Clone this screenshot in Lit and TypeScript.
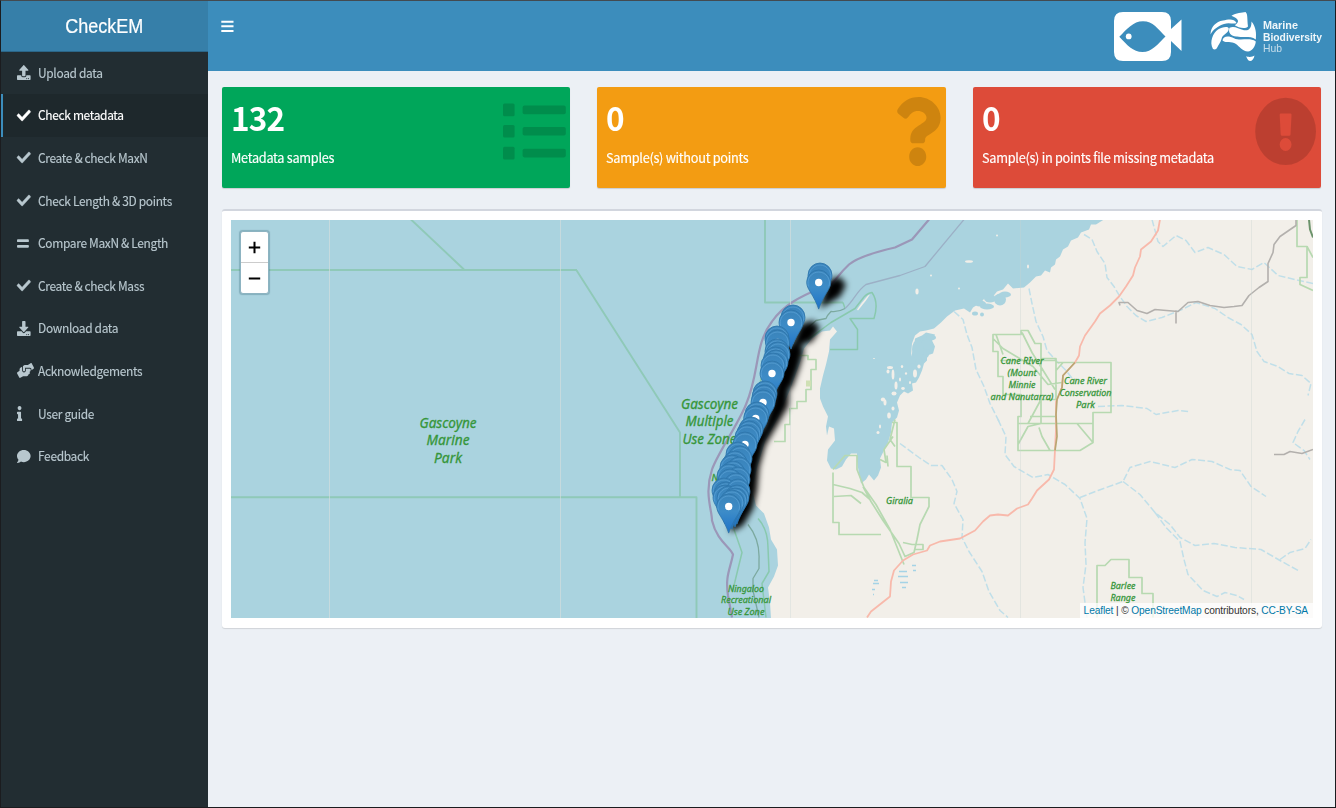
import { LitElement, html, svg, css } from "lit";
import { customElement, property } from "lit/decorators.js";

const DISK = "v112c0 13.3-10.7 24-24 24H24c-13.3 0-24-10.7-24-24V376c0-13.3 10.7-24 24-24h136v8c0 30.9 25.1 56 56 56h80c30.9 0 56-25.1 56-56v-8h136c13.3 0 24 10.7 24 24zm-124 88c0-11-9-20-20-20s-20 9-20 20 9 20 20 20 20-9 20-20zm64 0c0-11-9-20-20-20s-20 9-20 20 9 20 20 20 20-9 20-20z";
const ICONS: Record<string, { w: number; d: string }> = {
  upload: { w: 512, d: "M296 384h-80c-13.3 0-24-10.7-24-24V192h-87.7c-17.8 0-26.7-21.5-14.1-34.1L242.3 5.7c7.5-7.5 19.8-7.5 27.3 0l152.2 152.2c12.6 12.6 3.7 34.1-14.1 34.1H320v168c0 13.3-10.7 24-24 24zm216-8" + DISK },
  download: { w: 512, d: "M216 0h80c13.3 0 24 10.7 24 24v168h87.7c17.8 0 26.7 21.5 14.1 34.1L269.7 378.3c-7.5 7.5-19.8 7.5-27.3 0L90.1 226.1c-12.6-12.6-3.7-34.1 14.1-34.1H192V24c0-13.3 10.7-24 24-24zm296 376" + "v112c0 13.3-10.7 24-24 24H24c-13.3 0-24-10.7-24-24V376c0-13.3 10.7-24 24-24h146.7l49 49c20.1 20.1 52.5 20.1 72.6 0l49-49H488c13.3 0 24 10.7 24 24zm-124 88c0-11-9-20-20-20s-20 9-20 20 9 20 20 20 20-9 20-20zm64 0c0-11-9-20-20-20s-20 9-20 20 9 20 20 20 20-9 20-20z" },
  check: { w: 512, d: "M173.898 439.404l-166.4-166.4c-9.997-9.997-9.997-26.206 0-36.204l36.203-36.204c9.997-9.998 26.207-9.998 36.204 0L192 312.69 432.095 72.596c9.997-9.997 26.207-9.997 36.204 0l36.203 36.204c9.997 9.997 9.997 26.206 0 36.204l-294.4 294.401c-9.998 9.997-26.207 9.997-36.204-.001z" },
  equals: { w: 448, d: "M416 304H32c-17.67 0-32 14.33-32 32v32c0 17.67 14.33 32 32 32h384c17.67 0 32-14.33 32-32v-32c0-17.67-14.33-32-32-32zm0-192H32c-17.67 0-32 14.33-32 32v32c0 17.67 14.33 32 32 32h384c17.67 0 32-14.33 32-32v-32c0-17.67-14.33-32-32-32z" },
  hands: { w: 640, d: "M488 192H336v56c0 39.7-32.3 72-72 72s-72-32.3-72-72V126.4l-64.9 39C107.8 176.9 96 197.8 96 220.2v47.3l-80 46.2C.7 322.5-4.6 342.1 4.3 357.4l80 138.6c8.8 15.3 28.4 20.5 43.7 11.7L231.4 448H368c35.3 0 64-28.7 64-64h16c17.7 0 32-14.3 32-32v-64h8c13.3 0 24-10.7 24-24v-48c0-13.3-10.7-24-24-24zm147.7-37.4L555.7 16C546.9.7 527.3-4.5 512 4.3L408.6 64H306.4c-12 0-23.7 3.4-33.9 9.7L239 94.6c-9.4 5.8-15 16.1-15 27.1V248c0 22.1 17.9 40 40 40s40-17.9 40-40v-88h184c30.9 0 56 25.1 56 56v28.5l80-46.2c15.3-8.9 20.5-28.4 11.7-43.7z" },
  info: { w: 192, d: "M20 424.229h20V279.771H20c-11.046 0-20-8.954-20-20V212c0-11.046 8.954-20 20-20h112c11.046 0 20 8.954 20 20v212.229h20c11.046 0 20 8.954 20 20V492c0 11.046-8.954 20-20 20H20c-11.046 0-20-8.954-20-20v-47.771c0-11.046 8.954-20 20-20zM96 0C56.235 0 24 32.235 24 72s32.235 72 72 72 72-32.235 72-72S135.764 0 96 0z" },
  comment: { w: 512, d: "M256 32C114.6 32 0 125.1 0 240c0 49.6 21.4 95 57 130.7C44.5 421.1 2.7 466 2.2 466.5c-2.2 2.3-2.8 5.7-1.5 8.7S4.8 480 8 480c66.3 0 116-31.8 140.6-51.4 32.7 12.3 69 19.4 107.4 19.4 141.4 0 256-93.1 256-208S397.4 32 256 32z" },
};

const MENU: [string, string][] = [
  ["upload", "Upload data"],
  ["check", "Check metadata"],
  ["check", "Create & check MaxN"],
  ["check", "Check Length & 3D points"],
  ["equals", "Compare MaxN & Length"],
  ["check", "Create & check Mass"],
  ["download", "Download data"],
  ["hands", "Acknowledgements"],
  ["info", "User guide"],
  ["comment", "Feedback"],
];

@customElement("side-menu")
class SideMenu extends LitElement {
  static styles = css`
    :host { display: block; background: #222d32; }
    .item {
      display: flex; align-items: center; box-sizing: border-box; height: 42.6px;
      padding-left: 13px; border-left: 3px solid transparent; color: #b8c7ce;
      font: 13px/18px "Noto Sans CJK SC", "Noto Sans", sans-serif;
      white-space: nowrap;
    }
    .active { background: #1e282c; border-left: 2px solid #3c8dbc; padding-left: 14px; color: #fff; }
    .icon { width: 20.5px; flex: none; display: flex; }
    .icon svg { height: 15px; fill: currentColor; overflow: visible; }
    .icon .heavy { stroke: currentColor; stroke-width: 14; }
    .label { letter-spacing: -0.35px; transform: scaleX(0.918); transform-origin: left; -webkit-text-stroke: 0.15px currentColor; }
  `;
  render() {
    return html`${MENU.map(([icon, label], i) => {
      const { w, d } = ICONS[icon];
      return html`<div class="item ${i === 1 ? "active" : ""}">
        <span class="icon"><svg class=${icon === "check" ? "heavy" : ""} viewBox="0 0 ${w} 512" width=${(w / 512) * 13.6} preserveAspectRatio="none"><path d=${d}></path></svg></span>
        <span class="label">${label}</span>
      </div>`;
    })}`;
  }
}

@customElement("value-box")
class ValueBox extends LitElement {
  @property() value = "";
  @property() label = "";
  @property() kind = "";
  static styles = css`
    :host { display: block; }
    .box {
      display: flex; justify-content: space-between; box-sizing: border-box; height: 101.5px;
      padding: 0 0 0 9px; border-radius: 2px; color: #fff; box-shadow: 0 1px 1px rgba(0, 0, 0, 0.15);
      font-family: "Noto Sans CJK SC", "Noto Sans", sans-serif;
    }
    .list { background: #00a65a; }
    .question { background: #f39c12; }
    .alert { background: #dd4b39; }
    .value { font-size: 33px; line-height: 40px; font-weight: 700; margin-top: 10.5px; letter-spacing: -0.9px; transform: scaleX(0.955); transform-origin: left; }
    .label { font-size: 13.3px; line-height: 20px; margin-top: 10.5px; letter-spacing: -0.3px; white-space: nowrap; transform: scaleX(0.958); transform-origin: left; -webkit-text-stroke: 0.15px #fff; }
    svg { width: 80px; height: 90px; fill: rgba(0, 0, 0, 0.15); flex: none; }
  `;
  glyph() {
    if (this.kind === "list")
      return svg`${[16.6, 38, 59.8].map((y) => svg`<rect x="13" y=${y} width="11.6" height="12.6" rx="1.5"/><rect x="32.6" y=${y + 2} width="43.2" height="8.6" rx="1.8"/>`)}`;
    if (this.kind === "question")
      return svg`<path transform="translate(28 10) scale(.1235 .1348)" d="M202.021 0C122.202 0 70.503 32.703 29.914 91.026c-7.363 10.58-5.093 25.086 5.178 32.874l43.138 32.709c10.373 7.865 25.132 6.026 33.253-4.148 25.049-31.381 43.63-49.449 82.757-49.449 30.764 0 68.816 19.799 68.816 49.631 0 22.552-18.617 34.134-48.993 51.164-35.423 19.86-82.299 44.576-82.299 106.405V320c0 13.255 10.745 24 24 24h72.471c13.255 0 24-10.745 24-24v-5.773c0-42.86 125.268-44.645 125.268-160.627C377.504 66.256 286.902 0 202.021 0zM192 373.459c-38.196 0-69.271 31.075-69.271 69.271 0 38.195 31.075 69.27 69.271 69.27s69.271-31.075 69.271-69.271-31.075-69.27-69.271-69.27z"/>`;
    return svg`<path fill-rule="evenodd" d="M44.6 10.8A30.4 33.6 0 1 1 44.6 78A30.4 33.6 0 1 1 44.6 10.8ZM40 26.6H49.2Q50.6 26.6 50.5 28L49.5 47.4Q49.4 48.8 48 48.8H41.2Q39.8 48.8 39.7 47.4L38.7 28Q38.6 26.6 40 26.6ZM44.6 51A5.9 6.5 0 1 0 44.6 64A5.9 6.5 0 1 0 44.6 51Z"/>`;
  }
  render() {
    return html`<div class="box ${this.kind}">
      <div><div class="value">${this.value}</div><div class="label">${this.label}</div></div>
      <svg viewBox="0 0 80 90">${this.glyph()}</svg>
    </div>`;
  }
}

const LAND = "M1104 220L1096 225 1091 225 1089 230 1081 233 1078 238 1071 241 1068 247 1063 250 1060 257 1056 260 1055 265 1051 268 1050 273 1045 271 1041 276 1036 277 1030 283 1024 288 1013 289 1008 284 1003 290 997 292 993 297 986 297 981 303 973 308 970 313 964 309 955 311 947 317 941 323 934 329 926 331 920 332 915 336 912 344 911 357 914 348 915 339 922 336 926 333 935 335 932 341 935 347 933 354 927 356 927 361 924 364 922 371 919 378 916 383 912 384 913 391 908 394 904 392 900 396 897 403 899 411 897 418 892 423 891 433 888 443 883 453 880 459 881 468 878 476 874 481 869 475 866 480 861 484 859 474 857 462 857 454 851 454 846 460 842 467 836 470 831 469 827 461 828 450 835 441 834 429 829 427 827 436 826 427 828 417 823 407 820 399 820 389 823 376 826 365 829 352 830 340 837 332 833 327 830 331 822 332 812 339 804 349 800 363 790 390 778 418 765 442 757 468 752 490 756 506 764 514 769 528 771 540 777 550 778 566 774 577 768 588 770 603 771 619H1313V220Z";
const ISLES: [number, number, number, number][] = [
  [890, 368, 3, 1.5], [888, 372, 1.5, 2], [893, 375, 1.4, 5], [902, 367, 1.2, 1.5], [896, 386, 1.5, 4], [894, 394, 2.5, 2], [883, 400, 2.2, 2], [885, 403, 1.5, 3], [889, 416, 1.8, 3], [893, 409, 1.5, 2], [878, 433, 1.5, 1.5], [880, 427, 1, 2], [900, 380, 1, 2], [906, 374, 1.1, 1.2], [915, 374, 2, 4], [919, 367, 1.6, 2], [903, 389, 1.8, 1.4], [910, 383, 1, 1.6], [917, 292, 1.6, 3], [969, 262, 4, 1.3], [997, 236, 1, 1], [1028, 267, 1, 2], [931, 276, 1, 1], [959, 289, 1, 1], [874, 359, 1, 0.6],
];
const POOLS: [number, number, number, number][] = [
  [980, 304, 6, 3], [987, 307, 7, 3], [990, 299, 6, 4], [1000, 300, 6, 6], [1005, 295, 6, 3], [975, 314, 3, 2], [982, 315, 2, 2], [931, 338, 5, 3], [927, 345, 6, 5], [924, 355, 5, 4], [919, 364, 4, 6], [912, 372, 5, 8], [918, 350, 6, 10], [907, 385, 5, 7],
];
const STREAMS = [
  "M1084 235L1092 240 1097 252 1105 264 1107 278 1114 287 1120 297 1127 307 1136 316 1146 322 1162 318 1182 310 1196 303 1215 309 1228 318 1241 325 1252 335 1257 352 1264 362 1278 367 1289 374 1302 376 1311 384 1308 396",
  "M1152 220L1158 242 1163 247 1176 236 1186 241 1195 253 1208 248 1224 255 1237 267 1252 270 1264 263 1278 276 1295 280 1313 284",
  "M1029 289L1032 304 1036 322 1043 337 1047 351 1057 362 1066 371 1073 380",
  "M954 312L963 320 967 335 972 348 976 370 984 387 990 404 1000 424",
  "M900 444L919 458 931 466 942 466 952 480 957 492 954 504 963 520 962 538 969 552 982 572 989 592 1000 611 1008 618",
  "M998 420L1006 437 1005 455 1014 467 1033 478 1048 475 1065 485 1080 499 1087 519 1085 543 1086 565 1083 588 1087 618",
  "M1080 498L1098 491 1123 482 1130 468 1150 462 1175 468 1192 460 1212 462 1230 470 1240 471 1251 487 1266 497",
  "M1123 482L1140 495 1155 513 1170 525 1180 538 1195 546 1214 544 1235 548 1261 550 1280 561 1300 572",
  "M1155 513L1166 528 1180 542 1184 560 1188 575 1203 591 1217 597 1225 593 1237 596 1244 600",
  "M1098 407L1122 406 1147 409 1156 415 1178 411 1189 412",
  "M1305 420L1298 432 1293 443 1304 451 1310 460",
  "M1280 560L1290 553 1305 549 1311 540",
];
const GREEN = [
  "M765 220V303H843M576 270L680 433V498M231 270.5H577M411 220L464 270",
  "M231 497.8H696.5V619",
];
const RESERVES = [
  "M790 356H808V360H816V370H811V390H806V402H797V409H790V425H785V442H774",
  "M993 335H1021V331H1028L1035 344H1041V359H1056V400H1041V424H1093V443L1080 451H1018V417H1021V395H1003V377H998V352H993ZM1056 363H1111V413H1093V424M993 339L1003 349 1033 367 1048 385 1062 383M1022 333L1032 353 1055 390M996 335L1003 355M1041 359V400L1028 424M1018 424H1041L1028 427 1018 445M1039 428L1042 437 1050 451M1018 424H1093M1077 424L1093 443M1030 417H1056M1056 371L1063 363M1000 361H1056",
  "M892 423H897V467H911V498H929V507L920 525 917 540 914 553 905 557 899 544 883 521 871 502 863 487M833 470L845 456H857V470L864 488 876 505 890 530 904 565M833 473V523H839V535H881M833 485L850 489 862 493 870 500M834 497L851 496 861 504M895 420L890 440 895 447M893 437L884 450 886 463 880 460M887 456L888 467M903 543L912 545H923V550H914",
  "M1097 618V566L1105 566 1111 560H1129V578H1142V594H1153V618",
  "M1297 220V247H1307V278H1300V285L1313 291M1307 247L1313 258",
];
const ROADS = "M1160 220L1158 231 1151 242 1141 250 1140 257 1135 268 1133 276 1126 287 1119 297 1110 306 1100 314 1095 322 1085 336 1080 347 1079 356 1075 363 1063 376 1062 388 1056 402 1056 430 1054 470 1049 480 1037 491 1032 499 1028 505 1017 509 1008 516 998 515 990 516 983 522 975 531 960 539 940 542 930 546 927 551 913 555 903 561 894 571 891 582 890 597 871 612 867 618";
const ZONELABELS: { x: number; y: number; s: number; lh: number; t: string[]; w: number[] }[] = [
  { x: 448, y: 428.3, s: 14.2, lh: 17.6, t: ["Gascoyne", "Marine", "Park"], w: [57, 43, 28] },
  { x: 709.5, y: 409, s: 14.2, lh: 17.6, t: ["Gascoyne", "Multiple", "Use Zone"], w: [57, 48, 54] },
  { x: 1022, y: 364, s: 9.8, lh: 12, t: ["Cane RIver", "(Mount", "Minnie", "and Nanutarra)"], w: [43, 29, 27, 63] },
  { x: 1085.5, y: 384.5, s: 9.8, lh: 12, t: ["Cane River", "Conservation", "Park"], w: [43, 52, 19] },
  { x: 899.5, y: 504, s: 9.8, lh: 12, t: ["Giralia"], w: [27] },
  { x: 1123, y: 589.5, s: 9.8, lh: 12, t: ["Barlee", "Range"], w: [25, 25] },
  { x: 746, y: 592.3, s: 9.8, lh: 11.6, t: ["Ningaloo", "Recreational", "Use Zone"], w: [36, 50, 37] },
];
const PINS: [number, number][] = [
  [820, 276], [818.7, 283],
  [793, 318], [791, 323],
  [777, 339], [777.5, 343], [777, 352], [778, 355], [775.5, 360], [776, 363], [773, 366], [772, 374],
  [765, 394], [764, 398], [763, 403],
  [757, 415], [755.7, 419], [751, 430], [749, 434], [747, 438], [745, 445],
  [738, 455], [740, 459], [735, 464], [732, 468], [739, 470], [733, 474], [729, 477], [738, 480], [730, 482], [736, 486], [724, 491], [726, 495], [738, 492], [725, 498], [729, 499], [737, 498], [735, 501], [732, 503], [728.7, 507],
];
const PIN = "M0 26.6C-1.6 21.5-5.2 14.5-8.3 9.6C-10.6 6-12 3.2-12 -.2A12 12.3 0 0 1 12 -.2C12 3.2 10.6 6 8.3 9.6C5.2 14.5 1.6 21.5 0 26.6Z";

@customElement("sample-map")
class SampleMap extends LitElement {
  static styles = css`
    :host { display: grid; height: 397.5px; overflow: hidden; }
    .canvas, .controls, .credit { grid-area: 1 / 1; }
    .canvas { width: 100%; height: 397.5px; display: block; background: #aad3df; }
    .place {
      font-family: "Noto Sans", sans-serif; font-style: italic; fill: #36963a; text-anchor: middle;
    }
    .halo { fill: rgba(255, 255, 255, 0.4); stroke: rgba(255, 255, 255, 0.35); stroke-width: 1.6px; stroke-linejoin: round; }
    .place { stroke: #36963a; stroke-width: 0.3px; }
    .controls { justify-self: start; align-self: start; margin: 11px 0 0 9px; z-index: 1; border: 1px solid #8db3c1; border-radius: 3px; background: #fff; box-shadow: 0 0 1px 0.5px rgba(60, 110, 125, 0.35); width: 27px; }
    .zoom { display: flex; height: 30px; align-items: center; justify-content: center; }
    .zoom + .zoom { border-top: 1px solid #ccc; height: 29.5px; }
    .credit {
      justify-self: end; align-self: end; z-index: 1; background: rgba(255, 255, 255, 0.75); color: #333;
      font: 10.2px/15px "Liberation Sans", Arial, sans-serif; letter-spacing: -0.13px; padding: 0 5px 0 4px; white-space: nowrap;
    }
    .link { color: #0078a8; }
  `;
  render() {
    return html`
      <svg class="canvas" viewBox="231 220.5 1082 397.5" preserveAspectRatio="none">
        <defs>
          <linearGradient id="pin" x1="0" y1="0" x2="0" y2="1"><stop offset="0" stop-color="#3a83b9"></stop><stop offset=".45" stop-color="#3d8cc8"></stop><stop offset="1" stop-color="#1c72c8"></stop></linearGradient>
          <filter id="soft" x="-30%" y="-30%" width="160%" height="160%"><feGaussianBlur stdDeviation="3.3"></feGaussianBlur></filter>
        </defs>
        <path d=${LAND} fill="#f2efe9"></path>
        ${POOLS.map(([x, y, a, b]) => svg`<ellipse cx=${x} cy=${y} rx=${a} ry=${b} fill="#aad3df"/>`)}
        ${ISLES.map(([x, y, a, b]) => svg`<ellipse cx=${x} cy=${y} rx=${a} ry=${b} fill="#f2efe9"/>`)}
        <path d="M857 310L862 303 868 296 870 295 866 301 858 311Z" fill="#f2efe9"></path>
        <g fill="none" stroke-linejoin="round">
          ${STREAMS.map((d) => svg`<path d=${d} stroke="#c0dfe9" stroke-width="1.5" stroke-dasharray="7 2.5"/>`)}
          <path d="M899 572H907M898 577H908M900 583H908M902 588H906M874 581H878M873 584H879M872 590H875M873 595H874M912 566H916M913 571H916" stroke="#a5d3e6" stroke-width="1.5"></path>
          ${GREEN.map((d) => svg`<path d=${d} stroke="#8fc9b8" stroke-width="1.9"/>`)}
          ${RESERVES.map((d) => svg`<path d=${d} stroke="#b7d9b1" stroke-width="1.7"/>`)}
          <path d="M843 303L845 309M800 308L790 315 780 330 768 355 760 383 753 415M830 350H857.5V330L850 319H874Q879 303 872 293Q866 294 862 300L855 309 831 323 808 340M734 530L742 553 733 590M758 519Q768 530 768 548L769 572 762 584 766 618" stroke="#89c9ae" stroke-width="1.5"></path>
          <path d="M845 309Q838 313 831 312 827 316 826 319L816 321 806 330M748 525Q760 540 759 560L759 569 753 579V591L759 618" stroke="#7ca99f" stroke-width="1.3"></path>
          <path d="M929 220L912 240 895 248Q860 256 849 265C833 280 836 285 820 289C800 297 783 306 772 322C754 346 760 372 746 405C738 425 717 455 712 470C704 494 712 510 712 521C717 542 730 547 733 555C730 570 725 577 728 596L732 618" stroke="#9b97b8" stroke-width="2.2"></path>
          <path d="M964 220L925 267 900 276 866 285C856 292 855 300 845 309" stroke="#9cb0c6" stroke-width="1.3"></path>
          <path d="M1296 220V226L1280 237 1274 245 1273 253 1268 264V282L1259 288 1249 296 1242 306 1234 307 1224 308 1210 306 1198 302 1188 303 1178 312 1155 310 1147 314 1137 311 1128 303 1119 303 1120 306M1176 311V324M1274 455L1284 455 1290 452 1302 454 1313 450" stroke="#b3b0ad" stroke-width="1.6"></path>
          <path d=${ROADS} stroke="#f8b9ab" stroke-width="1.8"></path>
          <path d="M1075 363L1063 376 1062 388 1057 400 1056 415 1057 437 1055 451" stroke="#b9a672" stroke-width="1.7"></path>
          <path d="M1309 220L1310 230 1313 238" stroke="#6b936b" stroke-width="2"></path>
          <path d="M329.5 220V619M560.5 220V619M790.5 220V619" stroke="#d9dfdd" stroke-width=".8" opacity=".75"></path>
          <path d="M1020.5 220V619M1251.5 220V619" stroke="#c9d3d2" stroke-width=".7" opacity=".5"></path>
        </g>
        <rect x="806" y="381" width="5" height="6" fill="#cfe0b4"></rect>
        <text class="place" x="715" y="481" font-size="9.8">N</text>
        ${ZONELABELS.map((l) => l.t.map((t, i) => svg`<text class="place" x=${l.x} y=${l.y + i * l.lh} font-size=${l.s} textLength=${l.w[i]} lengthAdjust="spacingAndGlyphs">${t}</text>`))}
        <g filter="url(#soft)" fill="#000">
          <path d="M820 309L827 282 839 277 846 285 840 297Z"></path>
          <path d="M791 349L800 325 813 321 820 329 812 342Z"></path>
          <path d="M772 401L783 350 797 340 804 351 799 369 792 388Z"></path>
          <path d="M763 428L775 391 789 391 788 407 778 424 765 446 759 468 757 491 753 509 743 526 730 533 737 480 749 440Z"></path>
        </g>
        ${PINS.map(([x, y]) => svg`<g transform="translate(${x} ${y})"><path d=${PIN} fill="url(#pin)" stroke="#2c73aa" stroke-width=".8"/><path d="M-10.2 4A10.8 10.9 0 1 1 10.2 4" fill="none" stroke="#62a8dc" stroke-width=".8" opacity=".75"/><circle r="3.7" fill="#fff"/></g>`)}
      </svg>
      <div class="controls">
        <div class="zoom"><svg width="13" height="13"><path d="M6.5 .8V12.2M.8 6.5H12.2" stroke="#000" stroke-width="2"></path></svg></div>
        <div class="zoom"><svg width="13" height="13"><path d="M.8 6.5H12.2" stroke="#000" stroke-width="2"></path></svg></div>
      </div>
      <div class="credit"><span class="link">Leaflet</span> | © <span class="link">OpenStreetMap</span> contributors, <span class="link">CC-BY-SA</span></div>
    `;
  }
}

@customElement("app-root")
class AppRoot extends LitElement {
  static styles = css`
    :host { display: block; }
    .page {
      display: grid; grid-template-columns: 207px 1fr; box-sizing: border-box; width: 1336px; height: 808px;
      border: 1px solid #1b1c1f; border-top-color: #434a50; background: #ecf0f5; overflow: hidden;
    }
    .side { display: grid; grid-template-rows: 50.5px 1fr; }
    .brand {
      background: #367fa9; border-bottom: 1px solid #2b6688; box-sizing: border-box; display: flex; align-items: center; justify-content: center;
      color: #fff; font: 20px/50px "Liberation Sans", Arial, sans-serif;
    }
    .brand span { transform: scaleX(0.9); -webkit-text-stroke: 0.2px #fff; }
    .main { display: flex; flex-direction: column; min-width: 0; }
    .navbar { height: 70px; background: #3c8dbc; display: flex; justify-content: space-between; }
    .toggle { margin: 19px 0 0 13px; }
    .logos { display: flex; margin-right: 2px; }
    .boxes { display: grid; grid-template-columns: repeat(3, 348.4px); column-gap: 27px; margin: 15.7px 0 0 14px; }
    .panel {
      margin: 20.8px 0 0 14px; width: 1100px; box-sizing: border-box; padding: 9.5px 9px 10px; background: #fff;
      border-top: 2.5px solid #d2d6de; border-radius: 3px; box-shadow: 0 1px 1px rgba(0, 0, 0, 0.12);
    }
    .hub { font-family: "Liberation Sans", Arial, sans-serif; font-size: 10.8px; fill: #fff; }
    .bold { font-weight: 700; opacity: 0.92; }
    .thin { opacity: 0.7; font-size: 11.5px; }
  `;
  render() {
    return html`<div class="page">
      <div class="side">
        <div class="brand"><span>CheckEM</span></div>
        <side-menu></side-menu>
      </div>
      <div class="main">
        <div class="navbar">
          <svg class="toggle" width="13" height="13"><path d="M.3 1.7H12.5M.3 6.3H12.5M.3 11H12.5" stroke="#fff" stroke-width="2"></path></svg>
          <div class="logos">
            <svg width="220" height="69" viewBox="1113 1 220 69">
              <path fill="#fff" fill-rule="evenodd" d="M1123 12H1162Q1171 12 1171 21V29L1181.5 19.5V51L1171 41V52Q1171 61 1162 61H1123Q1114 61 1114 52V21Q1114 12 1123 12ZM1119.3 36.8C1127 29 1133 21.2 1143 21.2S1158 29 1165.5 36.5C1158 44 1152 52 1142.5 52S1127 45 1119.3 36.8Z"></path>
              <circle cx="1128.7" cy="36.4" r="2.9" fill="#fff"></circle>
              <g fill="#fff">
                <path d="M1210.5 34.5C1210.5 27 1216 21.5 1223 20.5C1228 19.5 1234 18 1236.5 23C1233 24.5 1229 22 1224 24C1218 26 1213 29.5 1210.5 34.5Z"></path>
                <path d="M1231.5 15.8C1236 13 1242 12.5 1245.5 12C1248 14 1247 19 1248 26.5C1245 29.5 1238 27.5 1234.8 25.2C1240 22 1239 19 1231.5 15.8Z"></path>
                <path d="M1213 49C1209 42 1213 33 1218 29.5C1222 27 1229 25.8 1228.8 29C1228 34 1222.5 34 1221.5 39C1220.5 43 1218.5 44.5 1217.5 47C1216.5 49.5 1214.5 50 1213 49Z"></path>
                <path d="M1229.5 27.8C1234 25.5 1238 28.5 1244 30.2C1250 31 1251.5 27 1251.5 21.5C1256 27 1256.5 33 1255.8 39.5C1250 35.5 1244 38 1237 36.5C1232 37 1227.5 33 1229.5 27.8Z"></path>
                <path d="M1222.5 40.5C1223 35.5 1229 35.5 1234 38.2C1240 41.5 1250 37 1255.8 41.5C1255.5 46 1252 51.5 1248 51.5C1242 51 1239.5 46.5 1236 44C1231 41 1226.5 43.5 1222.5 40.5Z"></path>
                <path d="M1246 56C1248 57.5 1253 57 1254.5 55.5C1254 59 1252 61 1250 61C1248 61 1247 58 1246 56Z"></path>
              </g>
              <text class="hub bold" x="1263" y="29" textLength="35" lengthAdjust="spacingAndGlyphs">Marine</text>
              <text class="hub bold" x="1263" y="40.5" textLength="59" lengthAdjust="spacingAndGlyphs">Biodiversity</text>
              <text class="hub thin" x="1263" y="52" textLength="19" lengthAdjust="spacingAndGlyphs">Hub</text>
            </svg>
          </div>
        </div>
        <div class="boxes">
          <value-box kind="list" value="132" label="Metadata samples"></value-box>
          <value-box kind="question" value="0" label="Sample(s) without points"></value-box>
          <value-box kind="alert" value="0" label="Sample(s) in points file missing metadata"></value-box>
        </div>
        <div class="panel"><sample-map></sample-map></div>
      </div>
    </div>`;
  }
}
